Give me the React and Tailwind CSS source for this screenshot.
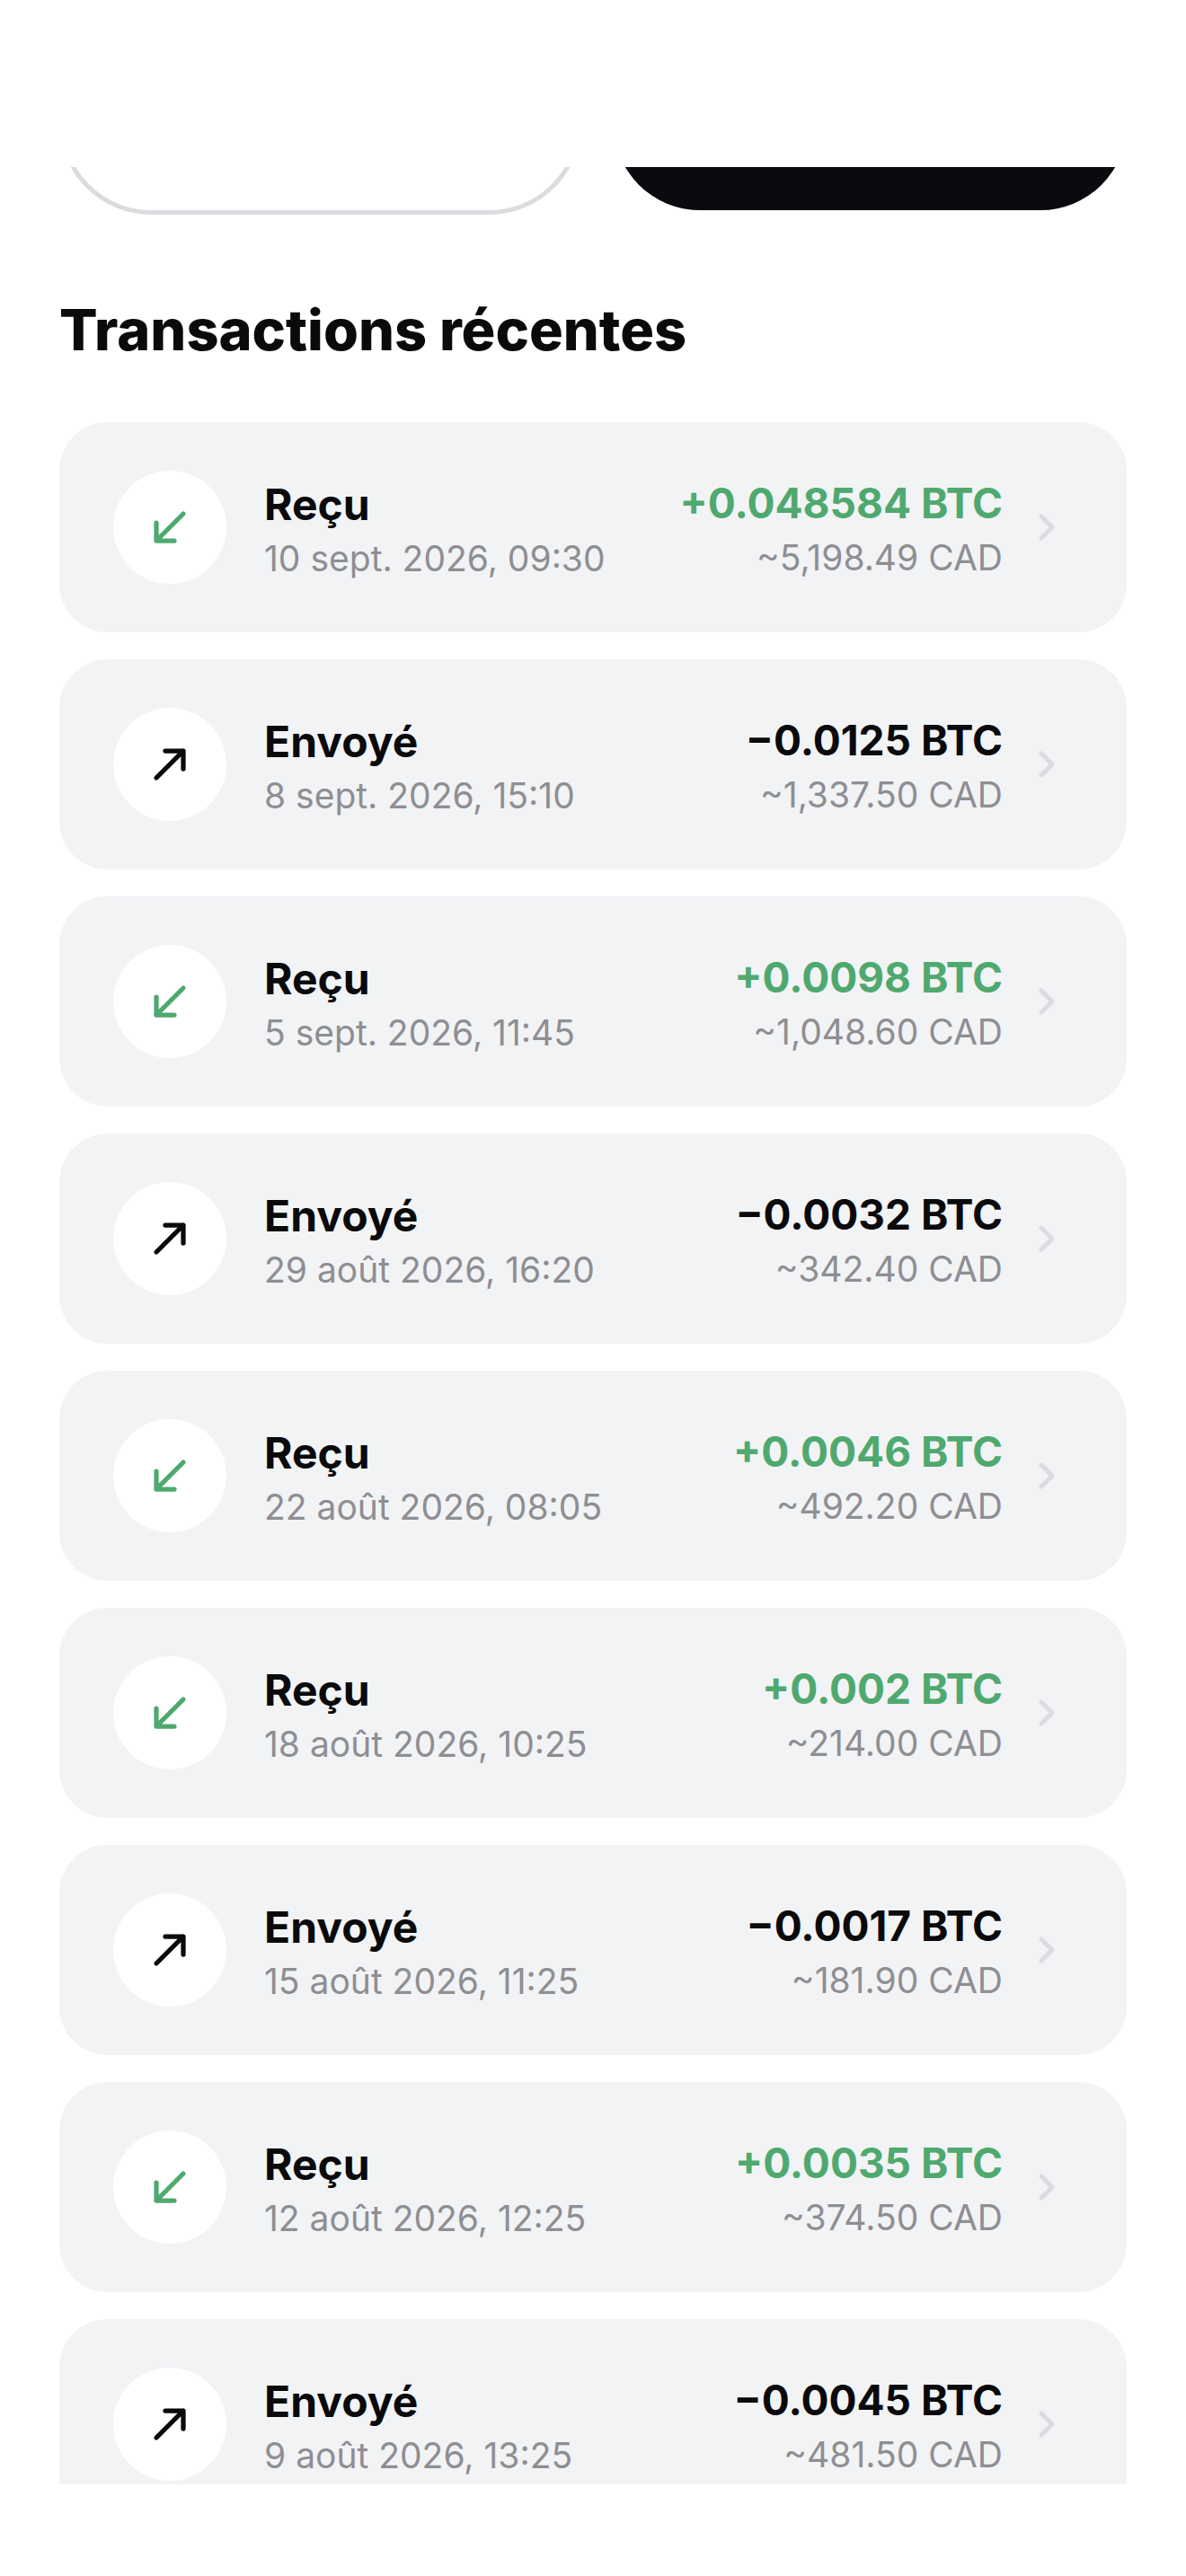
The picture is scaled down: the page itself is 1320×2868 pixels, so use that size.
import React from "react";

const transactions = [
  { type: "in", date: "10 sept. 2026, 09:30", btc: "+0.048584 BTC", cad: "~5,198.49 CAD" },
  { type: "out", date: "8 sept. 2026, 15:10", btc: "−0.0125 BTC", cad: "~1,337.50 CAD" },
  { type: "in", date: "5 sept. 2026, 11:45", btc: "+0.0098 BTC", cad: "~1,048.60 CAD" },
  { type: "out", date: "29 août 2026, 16:20", btc: "−0.0032 BTC", cad: "~342.40 CAD" },
  { type: "in", date: "22 août 2026, 08:05", btc: "+0.0046 BTC", cad: "~492.20 CAD" },
  { type: "in", date: "18 août 2026, 10:25", btc: "+0.002 BTC", cad: "~214.00 CAD" },
  { type: "out", date: "15 août 2026, 11:25", btc: "−0.0017 BTC", cad: "~181.90 CAD" },
  { type: "in", date: "12 août 2026, 12:25", btc: "+0.0035 BTC", cad: "~374.50 CAD" },
  { type: "out", date: "9 août 2026, 13:25", btc: "−0.0045 BTC", cad: "~481.50 CAD" },
];

const ArrowIcon = ({ type }) => (
  <svg
    width="60"
    height="60"
    viewBox="0 0 24 24"
    fill="none"
    stroke="currentColor"
    strokeWidth="2.1"
    strokeLinecap="round"
    strokeLinejoin="round"
    className={type === "in" ? "text-[#4fa96f]" : "text-[#0a0a0c]"}
  >
    {type === "in" ? <path d="M18 6 6 18M6 10v8h8" /> : <path d="M6 18 18 6M10 6h8v8" />}
  </svg>
);

const Chevron = () => (
  <svg
    width="48"
    height="48"
    viewBox="0 0 24 24"
    fill="none"
    stroke="currentColor"
    strokeWidth="2.5"
    strokeLinecap="round"
    strokeLinejoin="round"
    className="shrink-0 text-[#dcdce0]"
  >
    <path d="m9 6 6 6-6 6" />
  </svg>
);

const TransactionRow = ({ tx }) => (
  <div className="flex h-[234px] items-center rounded-[54px] bg-[#f2f3f5] pl-[60px] pr-[65px]">
    <div className="flex h-[126px] w-[126px] shrink-0 items-center justify-center rounded-full bg-white">
      <ArrowIcon type={tx.type} />
    </div>
    <div className="ml-[42px] flex-1">
      <p className="text-[48px] leading-[70px] font-bold text-[#0a0a0c]">
        {tx.type === "in" ? "Reçu" : "Envoyé"}
      </p>
      <p className="text-[39px] leading-[50px] text-[#8e8e93]">{tx.date}</p>
    </div>
    <div className="mb-[4px] text-right">
      <p
        className={`text-[46px] leading-[71px] font-bold ${
          tx.type === "in" ? "text-[#4fa96f]" : "text-[#0a0a0c]"
        }`}
      >
        {tx.btc}
      </p>
      <p className="text-[39px] leading-[50px] text-[#8e8e93]">{tx.cad}</p>
    </div>
    <div className="ml-[25px]">
      <Chevron />
    </div>
  </div>
);

export default function App() {
  return (
    <div className="h-[2868px] w-[1320px] bg-white pt-[186px] font-['Inter',sans-serif]">
      <div className="h-[2580px] overflow-hidden px-[66px]">
        <div className="-mt-[157px] flex items-start gap-[36px]">
          <div className="h-[210px] flex-1 rounded-[102px] border-[5px] border-[#dcdce0] bg-white" />
          <div className="h-[205px] flex-1 rounded-[96px] bg-[#0a0a0f]" />
        </div>
        <h2 className="mt-[90px] text-[63px] leading-[76px] font-extrabold text-[#0a0a0c]">
          Transactions récentes
        </h2>
        <div className="mt-[65px] flex flex-col gap-[30px]">
          {transactions.map((tx, index) => (
            <TransactionRow key={index} tx={tx} />
          ))}
        </div>
      </div>
    </div>
  );
}
